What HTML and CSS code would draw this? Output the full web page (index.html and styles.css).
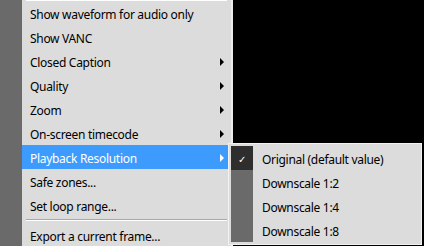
FILE: index.html
```html
<!DOCTYPE html>
<html lang="en">
<head>
  <meta charset="UTF-8" />
  <title>Player Context Menu</title>
  <link rel="stylesheet" href="styles.css">
</head>
<body>
  <div class="app">
    <div class="sidebar"></div>
    <div class="menu">
      <div class="sep top-sep"></div>
      <div class="item">Show waveform for audio only</div>
      <div class="item">Show VANC</div>
      <div class="item sub">Closed Caption</div>
      <div class="item sub">Quality</div>
      <div class="item sub">Zoom</div>
      <div class="item sub">On-screen timecode</div>
      <div class="item sub active">Playback Resolution</div>
      <div class="item">Safe zones...</div>
      <div class="item">Set loop range...</div>
      <div class="sep"></div>
      <div class="item">Export a current frame...</div>
    </div>
    <div class="viewer"></div>
  </div>

  <div class="submenu">
    <div class="sub-item checked"><span class="icon">&#10003;</span><span>Original (default value)</span></div>
    <div class="sub-item"><span class="icon"></span><span>Downscale 1:2</span></div>
    <div class="sub-item"><span class="icon"></span><span>Downscale 1:4</span></div>
    <div class="sub-item"><span class="icon"></span><span>Downscale 1:8</span></div>
  </div>
</body>
</html>
```

FILE: styles.css
```css
body { margin: 0; font-family: "Noto Sans", sans-serif; font-size: 12px; letter-spacing: -0.3px; color: #000; overflow: hidden; }
.app { display: flex; height: 246px; }
.sidebar { width: 22px; background: #6a6a6a; }
.menu { background: #dcdcdc; padding-right: 3px; border-right: 2px solid #ececec; width: 206px; }
.viewer { flex: 1; background: #000; }

.sep { height: 1px; background: #a8a8a8; border-bottom: 1px solid #fff; margin: 2px 1px 2px 4px; }
.sep.top-sep { background: #fff; border: 0; margin: 0 1px 0 4px; }

.item {
  height: 24px;
  line-height: 27px;
  padding-left: 8px;
  position: relative;
  white-space: nowrap;
}
.item.sub::after {
  content: "";
  position: absolute;
  right: 4px;
  top: 9px;
  border-left: 4px solid #000;
  border-top: 4px solid transparent;
  border-bottom: 4px solid transparent;
}
.item.active { background: #3d9bfd; color: #fff; }
.item.active::after { border-left-color: #fff; }

.submenu {
  position: absolute;
  left: 228px;
  top: 143px;
  width: 188px;
  padding: 2px;
  background: #dcdcdc;
  border: 1px solid #f2f2f2;
}
.sub-item { display: flex; height: 24px; line-height: 27px; white-space: nowrap; }
.sub-item .icon {
  width: 22px;
  margin-right: 9px;
  background: #6a6a6a;
  color: #fff;
  text-align: center;
  font-size: 10px;
}
.sub-item.checked .icon { background: #2e2e2e; }
```
